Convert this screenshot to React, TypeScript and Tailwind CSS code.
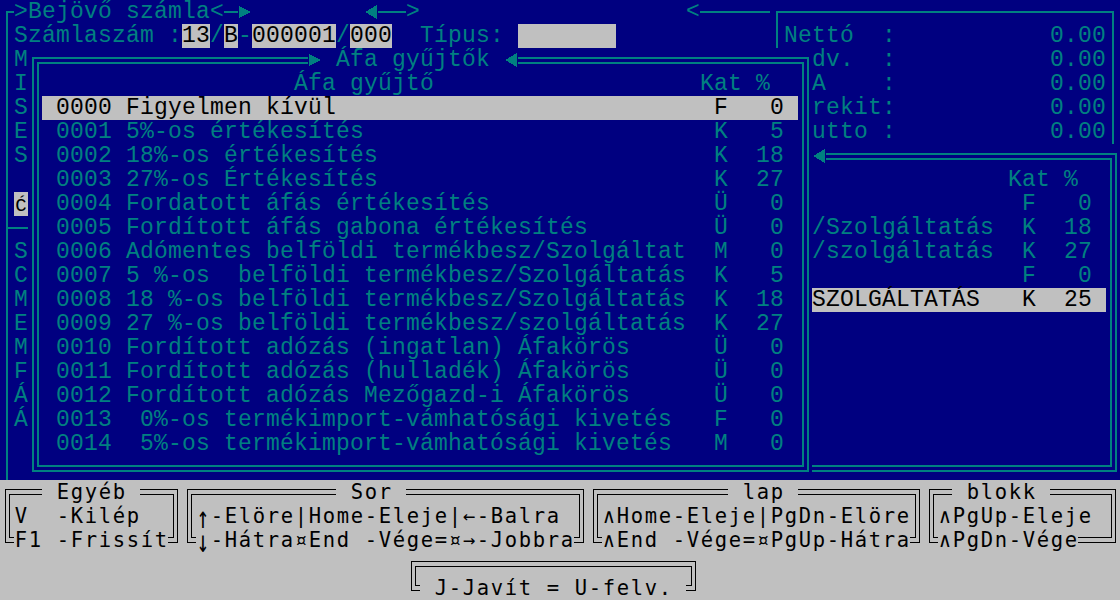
import React from 'react';

type Attr = 'n' | 'h' | 'g';
type Cell = { ch: string; a: Attr };

const COLS = 80;
const ROWS = 25;

function buildScreen(): Cell[][] {
  const rows: Cell[][] = [];
  for (let r = 0; r < ROWS; r++) {
    const row: Cell[] = [];
    for (let c = 0; c < COLS; c++) row.push({ ch: ' ', a: r >= 20 ? 'g' : 'n' });
    rows.push(row);
  }
  const put = (r: number, c: number, s: string, a?: Attr) => {
    Array.from(s).forEach((ch, i) => {
      if (c + i < COLS) {
        rows[r][c + i].ch = ch;
        if (a) rows[r][c + i].a = a;
      }
    });
  };
  const rep = (ch: string, n: number) => ch.repeat(n);

  // Row 0
  put(0, 0, '┌>Bejövő számla<─►');
  put(0, 26, '◄──>');
  put(0, 49, '<─────┌' + rep('─', 23) + '┐');

  // Row 1
  put(1, 0, '│Számlaszám :');
  put(1, 13, '13', 'h');
  put(1, 15, '/');
  put(1, 16, 'B', 'h');
  put(1, 17, '-');
  put(1, 18, '000001', 'h');
  put(1, 24, '/');
  put(1, 25, '000', 'h');
  put(1, 30, 'Típus:');
  put(1, 37, '       ', 'h');
  put(1, 55, '│Nettó  :');
  put(1, 75, '0.00');
  put(1, 79, '│');

  // Left frame
  const left: Record<number, string> = {
    2: 'M', 3: 'I', 4: 'S', 5: 'E', 6: 'S', 10: 'S', 11: 'C', 12: 'M', 13: 'E', 14: 'M', 15: 'F', 16: 'Á', 17: 'Á',
  };
  for (let r = 2; r < 20; r++) {
    put(r, 0, r === 9 ? '├' : '│');
    if (left[r]) put(r, 1, left[r]);
  }
  put(9, 1, '─');
  put(8, 1, 'Ć', 'h');

  // Right panel (top)
  const rp: [number, string][] = [
    [2, 'dv.'],
    [3, 'A'],
    [4, 'rekit'],
    [5, 'utto'],
  ];
  rp.forEach(([r, s]) => {
    put(r, 58, s);
    put(r, 63, ':');
    put(r, 75, '0.00');
    put(r, 79, '│');
  });

  // Second window (right)
  put(6, 58, '◄' + rep('═', 20) + '╗');
  for (let r = 7; r < 19; r++) put(r, 79, '║');
  put(19, 58, rep('═', 21) + '╝');
  put(7, 72, 'Kat');
  put(7, 76, '%');
  put(8, 73, 'F');
  put(8, 77, '0');
  put(9, 58, '/Szolgáltatás');
  put(9, 73, 'K');
  put(9, 76, '18');
  put(10, 58, '/szolgáltatás');
  put(10, 73, 'K');
  put(10, 76, '27');
  put(11, 73, 'F');
  put(11, 77, '0');
  put(12, 58, rep(' ', 21), 'h');
  put(12, 58, 'SZOLGÁLTATÁS');
  put(12, 73, 'K');
  put(12, 76, '25');

  // Popup
  put(2, 2, '╔' + rep('═', 19) + '► Áfa gyűjtők ◄' + rep('═', 20) + '╗');
  for (let r = 3; r < 19; r++) {
    put(r, 2, '║' + rep(' ', 54) + '║');
  }
  put(19, 2, '╚' + rep('═', 54) + '╝');
  put(3, 21, 'Áfa gyűjtő');
  put(3, 50, 'Kat');
  put(3, 54, '%');

  const items: [string, string, string, string][] = [
    ['0000', 'Figyelmen kívül', 'F', '0'],
    ['0001', '5%-os értékesítés', 'K', '5'],
    ['0002', '18%-os értékesítés', 'K', '18'],
    ['0003', '27%-os Értékesítés', 'K', '27'],
    ['0004', 'Fordatott áfás értékesítés', 'Ü', '0'],
    ['0005', 'Fordított áfás gabona értékesítés', 'Ü', '0'],
    ['0006', 'Adómentes belföldi termékbesz/Szolgáltat', 'M', '0'],
    ['0007', '5 %-os  belföldi termékbesz/Szolgáltatás', 'K', '5'],
    ['0008', '18 %-os belföldi termékbesz/Szolgáltatás', 'K', '18'],
    ['0009', '27 %-os belföldi termékbesz/szolgáltatás', 'K', '27'],
    ['0010', 'Fordított adózás (ingatlan) Áfakörös', 'Ü', '0'],
    ['0011', 'Fordított adózás (hulladék) Áfakörös', 'Ü', '0'],
    ['0012', 'Fordított adózás Mezőgazd-i Áfakörös', 'Ü', '0'],
    ['0013', ' 0%-os termékimport-vámhatósági kivetés', 'F', '0'],
    ['0014', ' 5%-os termékimport-vámhatósági kivetés', 'M', '0'],
  ];
  items.forEach(([code, name, kat, pct], i) => {
    const r = 4 + i;
    if (i === 0) put(r, 3, rep(' ', 54), 'h');
    put(r, 4, code);
    put(r, 9, name);
    put(r, 51, kat);
    put(r, 56 - pct.length, pct);
  });

  // Bottom key help
  put(20, 0, '╔══ Egyéb ══╗╔' + rep('═', 10) + ' Sor ' + rep('═', 12) + '╗╔' + rep('═', 9) + ' lap ' + rep('═', 8) + '╗╔═ blokk ════╗');
  put(21, 0, '║V  -Kilép  ║║↑-Elöre|Home-Eleje|←-Balra ║║∧Home-Eleje|PgDn-Elöre║║∧PgUp-Eleje ║');
  put(22, 0, '╚F1 -Frissít╝╚↓-Hátra¤End -Vége=¤→-Jobbra╝╚∧End -Vége=¤PgUp-Hátra╝╚∧PgDn-Vége══╝');
  put(23, 29, '╔' + rep('═', 19) + '╗');
  put(24, 29, '╚ J-Javít = U-felv. ╝');

  return rows;
}

type R = [number, number, number, number];

function boxRects(ch: string, thin: boolean): R[] | null {
  const t = thin ? 1 : 2;
  const sx = thin ? 7 : 6;
  const sy = thin ? 12 : 11;
  const xa = thin ? 5 : 4;
  const xb = 9;
  const ya = 9;
  const yb = 14;
  const W = 14;
  const H = 24;
  switch (ch) {
    case '─':
      return [[0, sy, W, t]];
    case '│':
      return [[sx, 0, t, H]];
    case '┌':
      return [[sx, sy, W - sx, t], [sx, sy, t, H - sy]];
    case '┐':
      return [[0, sy, sx + t, t], [sx, sy, t, H - sy]];
    case '└':
      return [[sx, 0, t, sy + t], [sx, sy, W - sx, t]];
    case '┘':
      return [[sx, 0, t, sy + t], [0, sy, sx + t, t]];
    case '├':
      return [[sx, 0, t, H], [sx, sy, W - sx, t]];
    case '═':
      return [[0, ya, W, t], [0, yb, W, t]];
    case '║':
      return [[xa, 0, t, H], [xb, 0, t, H]];
    case '╔':
      return [
        [xa, ya, W - xa, t],
        [xa, ya, t, H - ya],
        [xb, yb, W - xb, t],
        [xb, yb, t, H - yb],
      ];
    case '╗':
      return [
        [0, ya, xb + t, t],
        [xb, ya, t, H - ya],
        [0, yb, xa + t, t],
        [xa, yb, t, H - yb],
      ];
    case '╚':
      return [
        [xa, 0, t, yb + t],
        [xa, yb, W - xa, t],
        [xb, 0, t, ya + t],
        [xb, ya, W - xb, t],
      ];
    case '╝':
      return [
        [xb, 0, t, yb + t],
        [0, yb, xb + t, t],
        [xa, 0, t, ya + t],
        [0, ya, xa + t, t],
      ];
    default:
      return null;
  }
}

function Glyph({ ch, thin }: { ch: string; thin: boolean }) {
  if (ch === '►') {
    return (
      <svg width={14} height={24} className="block" shapeRendering="crispEdges">
        <polygon points="1,6 13,12 1,18" fill="currentColor" />
      </svg>
    );
  }
  if (ch === '◄') {
    return (
      <svg width={14} height={24} className="block" shapeRendering="crispEdges">
        <polygon points="13,5 1,12 13,19" fill="currentColor" />
      </svg>
    );
  }
  const rects = boxRects(ch, thin);
  if (!rects) return null;
  return (
    <svg width={14} height={24} className="block" shapeRendering="crispEdges">
      {rects.map(([x, y, w, h], i) => (
        <rect key={i} x={x} y={y} width={w} height={h} fill="currentColor" />
      ))}
    </svg>
  );
}

const BOX = new Set(['─', '│', '┌', '┐', '└', '┘', '├', '═', '║', '╔', '╗', '╚', '╝', '►', '◄']);

function attrClass(a: Attr): string {
  if (a === 'n') return 'bg-[#000080] text-[#008080]';
  return 'bg-[#c0c0c0] text-black';
}

function extraClass(ch: string): string {
  if (ch === 'Ć') return 'text-[19px] leading-[28px]';
  return '';
}

function CellContent({ ch, bottom }: { ch: string; bottom: boolean }) {
  if (BOX.has(ch)) return <Glyph ch={ch} thin={bottom} />;
  if (ch === '↑' || ch === '↓') {
    return <span className="inline-block scale-y-[1.5] translate-y-[1px]">{ch}</span>;
  }
  return <>{ch}</>;
}

function Row({ cells, bottom }: { cells: Cell[]; bottom: boolean }) {
  return (
    <div
      className={
        bottom
          ? "flex h-[24px] font-['DejaVu_Sans_Mono',monospace] text-[20.5px] leading-[24px]"
          : "flex h-[24px] font-['Liberation_Mono',monospace] text-[23px] leading-[24px]"
      }
    >
      {cells.map((cell, i) => (
        <span
          key={i}
          className={`inline-block w-[14px] h-[24px] shrink-0 text-center whitespace-pre overflow-visible ${attrClass(cell.a)} ${extraClass(cell.ch)}`}
        >
          <CellContent ch={cell.ch} bottom={bottom} />
        </span>
      ))}
    </div>
  );
}

export default function App() {
  const screen = buildScreen();
  return (
    <div className="w-[1120px] h-[600px] overflow-hidden bg-[#000080]">
      {screen.map((cells, r) => (
        <Row key={r} cells={cells} bottom={r >= 20} />
      ))}
    </div>
  );
}
